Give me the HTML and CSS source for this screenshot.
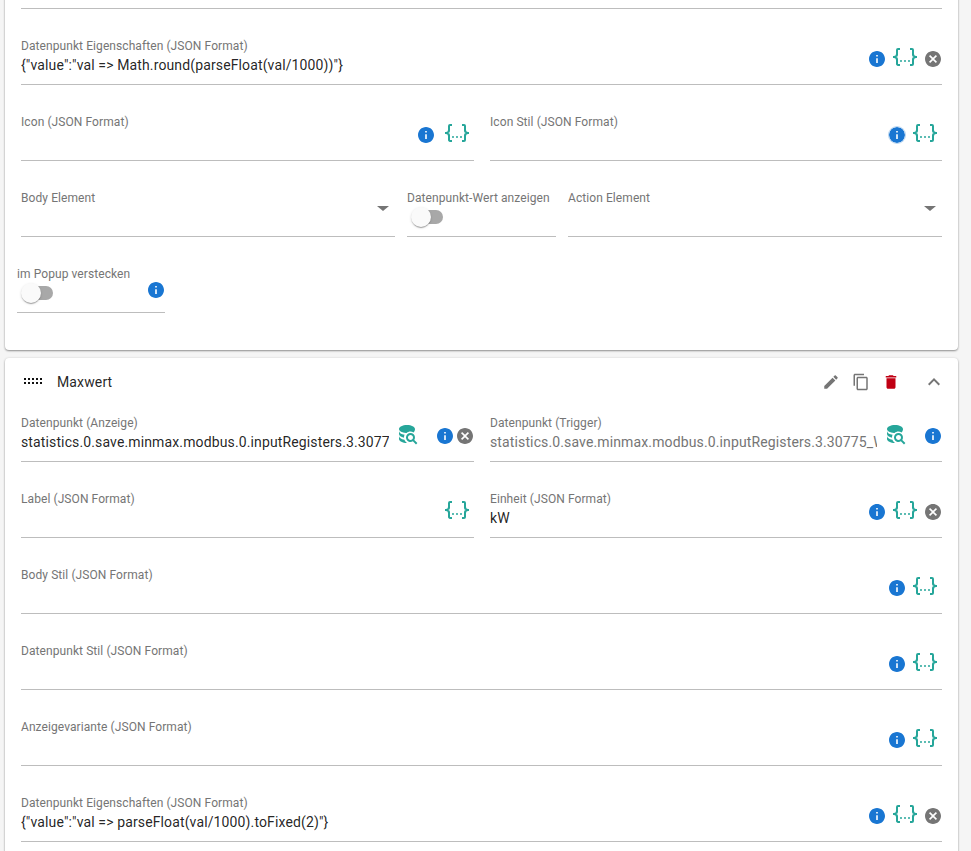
FILE: index.html
```html
<!DOCTYPE html>
<html lang="de">
<head>
    <meta charset="UTF-8">
    <title>Maxwert</title>
    <link rel="stylesheet" href="styles.css">
</head>
<body>
    <svg class="sprite" aria-hidden="true">
        <symbol id="i-info" viewBox="2 2 20 20"><path d="M12 2C6.48 2 2 6.48 2 12s4.48 10 10 10 10-4.48 10-10S17.52 2 12 2zm1 15h-2v-6h2v6zm0-8h-2V7h2v2z"/></symbol>
        <symbol id="i-clear" viewBox="2 2 20 20"><path d="M12 2C6.47 2 2 6.47 2 12s4.47 10 10 10 10-4.47 10-10S17.53 2 12 2zm5 13.59L15.59 17 12 13.41 8.41 17 7 15.59 10.59 12 7 8.41 8.41 7 12 10.59 15.59 7 17 8.41 13.41 12 17 15.59z"/></symbol>
        <symbol id="i-json" viewBox="0 0 24 24"><path d="M5,3H7V5H5V10A2,2 0 0,1 3,12A2,2 0 0,1 5,14V19H7V21H5C3.93,20.73 3,20.1 3,19V15A2,2 0 0,0 1,13H0V11H1A2,2 0 0,0 3,9V5A2,2 0 0,1 5,3M19,3A2,2 0 0,1 21,5V9A2,2 0 0,0 23,11H24V13H23A2,2 0 0,0 21,15V19A2,2 0 0,1 19,21H17V19H19V14A2,2 0 0,1 21,12A2,2 0 0,1 19,10V5H17V3H19M12,15A1,1 0 0,1 13,16A1,1 0 0,1 12,17A1,1 0 0,1 11,16A1,1 0 0,1 12,15M8,15A1,1 0 0,1 9,16A1,1 0 0,1 8,17A1,1 0 0,1 7,16A1,1 0 0,1 8,15M16,15A1,1 0 0,1 17,16A1,1 0 0,1 16,17A1,1 0 0,1 15,16A1,1 0 0,1 16,15Z"/></symbol>
        <symbol id="i-db" viewBox="3 2 20 21"><path d="M18.68,12.32C16.92,10.56 14.07,10.57 12.32,12.33C10.56,14.09 10.56,16.94 12.32,18.69C13.81,20.17 16.11,20.43 17.89,19.32L21,22.39L22.39,21L19.3,17.89C20.43,16.12 20.17,13.8 18.68,12.32M17.27,17.27C16.29,18.25 14.71,18.24 13.73,17.27C12.76,16.29 12.76,14.71 13.73,13.73C14.71,12.76 16.29,12.76 17.27,13.73C18.24,14.71 18.24,16.29 17.27,17.27M10.9,20.1C10.25,19.44 9.74,18.65 9.42,17.78C6.27,17.25 4,15.76 4,14V17C4,19.21 7.58,21 12,21V21C11.6,20.74 11.23,20.44 10.9,20.1M4,9V12C4,13.68 6.07,15.12 9,15.7C9,15.63 9,15.57 9,15.5C9,14.57 9.2,13.65 9.58,12.81C6.34,12.3 4,10.79 4,9M12,3C7.58,3 4,4.79 4,7C4,9 7,10.68 11,11H11.59C12.62,10.06 13.96,9.5 15.34,9.5C16.5,9.5 17.6,9.8 18.56,10.39C19.5,9.56 20,8.3 20,7C20,4.79 16.42,3 12,3Z"/></symbol>
    </svg>

    <main class="page">
        <section class="card">
            <div class="row"><div class="field"></div></div>

            <div class="row">
                <div class="field">
                    <div class="field-main">
                        <label>Datenpunkt Eigenschaften (JSON Format)</label>
                        <div class="value">{"value":"val =&gt; Math.round(parseFloat(val/1000))"}</div>
                    </div>
                    <div class="icons has-clear">
                        <svg class="ic-info"><use href="#i-info"/></svg>
                        <svg class="ic-json"><use href="#i-json"/></svg>
                        <svg class="ic-clear"><use href="#i-clear"/></svg>
                    </div>
                </div>
            </div>

            <div class="row row-half">
                <div class="field">
                    <div class="field-main"><label>Icon (JSON Format)</label></div>
                    <div class="icons icons-wide">
                        <svg class="ic-info"><use href="#i-info"/></svg>
                        <svg class="ic-json"><use href="#i-json"/></svg>
                    </div>
                </div>
                <div class="field">
                    <div class="field-main"><label>Icon Stil (JSON Format)</label></div>
                    <div class="icons">
                        <svg class="ic-info focused"><use href="#i-info"/></svg>
                        <svg class="ic-json"><use href="#i-json"/></svg>
                    </div>
                </div>
            </div>

            <div class="row row-three">
                <div class="field">
                    <div class="field-main"><label>Body Element</label></div>
                    <span class="arrow"></span>
                </div>
                <div class="field">
                    <div class="field-main">
                        <label>Datenpunkt-Wert anzeigen</label>
                        <span class="switch"></span>
                    </div>
                </div>
                <div class="field">
                    <div class="field-main"><label>Action Element</label></div>
                    <span class="arrow"></span>
                </div>
            </div>

            <div class="row">
                <div class="field field-popup">
                    <div class="field-main">
                        <label>im Popup verstecken</label>
                        <span class="switch"></span>
                    </div>
                    <svg class="ic-info popup-info"><use href="#i-info"/></svg>
                </div>
            </div>
        </section>

        <section class="card">
            <header class="card-head">
                <span class="drag"></span>
                <span class="card-title">Maxwert</span>
                <div class="actions">
                    <svg viewBox="0 0 24 24"><path d="M3 17.25V21h3.75L17.81 9.94l-3.75-3.75L3 17.25zM20.71 7.04c.39-.39.39-1.02 0-1.41l-2.34-2.34c-.39-.39-1.02-.39-1.41 0l-1.83 1.83 3.75 3.75 1.83-1.83z"/></svg>
                    <svg viewBox="0 0 24 24"><path d="M16 1H4c-1.1 0-2 .9-2 2v14h2V3h12V1zm3 4H8c-1.1 0-2 .9-2 2v14c0 1.1.9 2 2 2h11c1.1 0 2-.9 2-2V7c0-1.1-.9-2-2-2zm0 16H8V7h11v14z"/></svg>
                    <svg class="act-delete" viewBox="0 0 24 24"><path d="M6 19c0 1.1.9 2 2 2h8c1.1 0 2-.9 2-2V7H6v12zM19 4h-3.5l-1-1h-5l-1 1H5v2h14V4z"/></svg>
                    <svg class="act-collapse" viewBox="0 0 24 24"><path d="M12 8l-6 6 1.41 1.41L12 10.83l4.59 4.58L18 14z"/></svg>
                </div>
            </header>

            <div class="row row-half">
                <div class="field">
                    <div class="field-main">
                        <label>Datenpunkt (Anzeige)</label>
                        <div class="value">statistics.0.save.minmax.modbus.0.inputRegisters.3.30775_W</div>
                    </div>
                    <div class="icons icons-dp has-clear">
                        <svg class="ic-db"><use href="#i-db"/></svg>
                        <svg class="ic-info"><use href="#i-info"/></svg>
                        <svg class="ic-clear"><use href="#i-clear"/></svg>
                    </div>
                </div>
                <div class="field">
                    <div class="field-main">
                        <label>Datenpunkt (Trigger)</label>
                        <div class="value value-muted">statistics.0.save.minmax.modbus.0.inputRegisters.3.30775_W</div>
                    </div>
                    <div class="icons icons-dp has-clear">
                        <svg class="ic-db"><use href="#i-db"/></svg>
                        <svg class="ic-info"><use href="#i-info"/></svg>
                    </div>
                </div>
            </div>

            <div class="row row-half">
                <div class="field">
                    <div class="field-main"><label>Label (JSON Format)</label></div>
                    <div class="icons">
                        <svg class="ic-json"><use href="#i-json"/></svg>
                    </div>
                </div>
                <div class="field">
                    <div class="field-main">
                        <label>Einheit (JSON Format)</label>
                        <div class="value">kW</div>
                    </div>
                    <div class="icons has-clear">
                        <svg class="ic-info"><use href="#i-info"/></svg>
                        <svg class="ic-json"><use href="#i-json"/></svg>
                        <svg class="ic-clear"><use href="#i-clear"/></svg>
                    </div>
                </div>
            </div>

            <div class="row">
                <div class="field">
                    <div class="field-main"><label>Body Stil (JSON Format)</label></div>
                    <div class="icons">
                        <svg class="ic-info"><use href="#i-info"/></svg>
                        <svg class="ic-json"><use href="#i-json"/></svg>
                    </div>
                </div>
            </div>

            <div class="row">
                <div class="field">
                    <div class="field-main"><label>Datenpunkt Stil (JSON Format)</label></div>
                    <div class="icons">
                        <svg class="ic-info"><use href="#i-info"/></svg>
                        <svg class="ic-json"><use href="#i-json"/></svg>
                    </div>
                </div>
            </div>

            <div class="row">
                <div class="field">
                    <div class="field-main"><label>Anzeigevariante (JSON Format)</label></div>
                    <div class="icons">
                        <svg class="ic-info"><use href="#i-info"/></svg>
                        <svg class="ic-json"><use href="#i-json"/></svg>
                    </div>
                </div>
            </div>

            <div class="row">
                <div class="field">
                    <div class="field-main">
                        <label>Datenpunkt Eigenschaften (JSON Format)</label>
                        <div class="value">{"value":"val =&gt; parseFloat(val/1000).toFixed(2)"}</div>
                    </div>
                    <div class="icons has-clear">
                        <svg class="ic-info"><use href="#i-info"/></svg>
                        <svg class="ic-json"><use href="#i-json"/></svg>
                        <svg class="ic-clear"><use href="#i-clear"/></svg>
                    </div>
                </div>
            </div>
        </section>
    </main>
</body>
</html>
```

FILE: styles.css
```css
html, body {
    height: 100%;
    margin: 0;
    overflow: hidden;
}
body {
    font-family: Roboto, "Liberation Sans", sans-serif;
    background-color: #f5f5f5;
    color: rgba(0, 0, 0, 0.87);
}
.sprite {
    display: none;
}
.page {
    padding: 0 13px 0 5px;
    margin-top: -67px; /* scrolled: the row above is only partly in view */
}
.card {
    background-color: #fff;
    border-radius: 4px;
    padding: 0 16px 37px;
    box-shadow: 0 1px 2px rgba(0, 0, 0, 0.4), 0 0 3px rgba(0, 0, 0, 0.08);
    margin-bottom: 8px;
}

/* header of a collapsible card */
.card-head {
    display: flex;
    align-items: center;
    height: 48px;
}
.drag {
    width: 20px;
    height: 6px;
    margin: 0 15px 2px 1px;
    background-image: conic-gradient(#111 25%, transparent 0);
    background-size: 4px 4px;
}
.card-title {
    font-size: 14px;
    letter-spacing: 0.13px;
}
.actions {
    margin: 0 -4px 0 auto;
    display: flex;
    align-items: center;
    gap: 12px;
}
.actions svg {
    width: 18px;
    height: 18px;
    fill: #757575;
}
.actions .act-delete {
    fill: #c00013;
}
.actions .act-collapse {
    width: 24px;
    height: 24px;
    margin-left: 10px;
}

/* form rows */
.row {
    display: flex;
    gap: 16px;
    padding-top: 29px;
}
.row-half {
    display: grid;
    grid-template-columns: 453px 452px;
}
.card-head + .row {
    padding-top: 9px;
}
.row-three {
    gap: 12px;
}
.row-three .field:nth-child(2) {
    flex: 0 0 149px;
}
.field {
    flex: 1 1 0;
    min-width: 0;
    height: 47px;
    box-sizing: border-box;
    display: flex;
    border-bottom: 1px solid #bdbdbd;
}
.field-main {
    flex: 1 1 0;
    min-width: 0;
    padding-top: 1px;
}
.field-main label {
    display: block;
    font-size: 12px;
    line-height: 14px;
    letter-spacing: 0.08px;
    color: #757575;
    white-space: nowrap;
}
.value {
    font-size: 14px;
    line-height: 20px;
    letter-spacing: 0.13px;
    margin-top: 2px;
    white-space: nowrap;
    overflow: hidden;
}
.value-muted {
    color: #757575;
}

/* icons at the right of a field */
.icons {
    display: flex;
    align-items: flex-start;
    gap: 8px;
    padding: 7px 5px 0 8px;
}
.icons.has-clear {
    padding-right: 1px;
}
.icons-wide {
    gap: 11px;
}
.icons-dp {
    gap: 0;
}
.ic-info {
    width: 16px;
    height: 16px;
    margin-top: 6px;
    fill: #1976d2;
}
.ic-info.focused {
    border-radius: 50%;
    box-shadow: 0 0 0 1px rgba(25, 118, 210, 0.3);
}
.ic-json {
    width: 24px;
    height: 24px;
    margin-top: -0.5px;
    fill: #26a69a;
}
.ic-clear {
    width: 16px;
    height: 16px;
    margin-top: 6px;
    fill: #757575;
}
.ic-db {
    width: 20px;
    height: 21px;
    margin: 2px 19px 0 1px;
    fill: #26a69a;
}
.icons-dp .ic-clear {
    margin-left: 4px;
}
.popup-info {
    margin: 16px 1px 0 0;
}
.field-popup {
    flex: 0 0 148px;
    margin-left: -4px;
}

/* select arrow and switch */
.arrow {
    align-self: flex-start;
    margin: 16px 6px 0 0;
    border-top: 5px solid #757575;
    border-left: 6px solid transparent;
    border-right: 6px solid transparent;
}
.switch {
    display: block;
    position: relative;
    width: 29px;
    height: 14px;
    margin: 5px 0 0 7px;
    border-radius: 7px;
    background-color: #a8a8a8;
}
.switch::after {
    content: "";
    position: absolute;
    top: -3px;
    left: -3px;
    width: 20px;
    height: 20px;
    border-radius: 50%;
    background-color: #fafafa;
    box-shadow: 0 2px 1px -1px rgba(0, 0, 0, 0.2), 0 1px 1px 0 rgba(0, 0, 0, 0.14), 0 1px 3px 0 rgba(0, 0, 0, 0.12);
}
```
